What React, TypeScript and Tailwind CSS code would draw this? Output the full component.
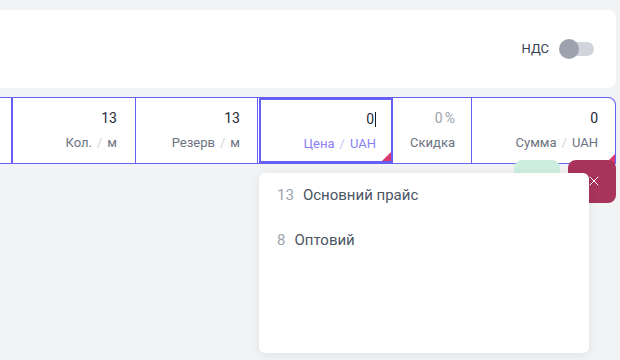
import { X } from "lucide-react";

const font = { fontFamily: "Roboto, 'Noto Sans', sans-serif" };

function Label({ name, unit, active }: { name: string; unit?: string; active?: boolean }) {
  return (
    <div className={`mt-[6px] text-[13px] leading-[17px] ${active ? "text-[#8a80f5]" : "text-[#6b7280]"}`}>
      {name}
      {unit && (
        <>
          <span className={`mx-[5px] ${active ? "text-[#c9c4fb]" : "text-[#d1d5db]"}`}>/</span>
          {unit}
        </>
      )}
    </div>
  );
}

function Corner() {
  return (
    <span className="absolute bottom-0 right-0 w-0 h-0 border-l-[9px] border-l-transparent border-b-[9px] border-b-[#d9396f]" />
  );
}

export default function App() {
  return (
    <div className="relative w-[620px] h-[360px] overflow-hidden bg-[#f2f3f5]" style={font}>
      {/* settings card */}
      <div className="mt-[10px] mr-[4px] h-[78px] bg-white rounded-r-lg flex items-center justify-end pr-[22px]">
        <span className="text-[13px] text-[#374151] mr-[10px]">НДС</span>
        <div className="relative w-[35px] h-[20px] flex items-center">
          <div className="absolute left-[6px] right-0 h-[14px] rounded-full bg-[#d1d5db]" />
          <div className="relative w-[20px] h-[20px] rounded-full bg-[#9ca3af]" />
        </div>
      </div>

      {/* line row */}
      <div className="mt-[9px] mr-[4px] h-[67px] flex bg-white border-y border-r border-[#6760f5] rounded-tr-lg">
        <div className="w-[13px] border-r-2 border-[#6760f5]" />
        <div className="w-[123px] border-r border-[#6760f5] flex flex-col items-end pt-[10px] pr-[18px]">
          <div className="text-[14px] leading-5 text-[#1f2937]">13</div>
          <Label name="Кол." unit="м" />
        </div>
        <div className="w-[122px] border-r border-[#6760f5] flex flex-col items-end pt-[10px] pr-[17px]">
          <div className="text-[14px] leading-5 text-[#1f2937]">13</div>
          <Label name="Резерв" unit="м" />
        </div>
        <div className="relative ml-px w-[134px] border-2 border-[#6760f5] flex flex-col items-end pt-[9px] pr-[15px]">
          <div className="text-[14px] leading-5 text-[#1f2937] flex items-center">
            0<span className="ml-px w-px h-[15px] bg-[#111827]" />
          </div>
          <Label name="Цена" unit="UAH" active />
          <Corner />
        </div>
        <div className="w-[79px] border-r border-[#6760f5] flex flex-col items-end pt-[10px] pr-[16px]">
          <div className="text-[14px] leading-5 text-[#9ca3af]">
            0<span className="ml-[2px]">%</span>
          </div>
          <Label name="Скидка" />
        </div>
        <div className="relative flex-1 flex flex-col items-end pt-[10px] pr-[17px] rounded-tr-lg">
          <div className="text-[14px] leading-5 text-[#1f2937]">0</div>
          <Label name="Сумма" unit="UAH" />
          <Corner />
        </div>
      </div>

      {/* action buttons */}
      <div className="absolute left-[514px] top-[160px] w-[46px] h-[43px] rounded-lg bg-[#cdeedf]" />
      <button className="absolute left-[568px] top-[160px] w-[48px] h-[43px] rounded-lg bg-[#a8335b] flex items-center justify-center text-white">
        <span className="ml-[3px] -mt-[2px]">
          <X size={16} strokeWidth={1.5} />
        </span>
      </button>

      {/* price list dropdown */}
      <div className="absolute left-[259px] top-[173px] w-[330px] h-[180px] bg-white rounded-md shadow-[0_2px_10px_rgba(17,24,39,0.08)] text-[15px]">
        <div className="h-[45px] flex items-center px-[18px]">
          <span className="text-[#9ca3af] mr-[9px]">13</span>
          <span className="text-[#4b5563]">Основний прайс</span>
        </div>
        <div className="h-[45px] flex items-center px-[18px]">
          <span className="text-[#9ca3af] mr-[9px]">8</span>
          <span className="text-[#4b5563]">Оптовий</span>
        </div>
      </div>
    </div>
  );
}
